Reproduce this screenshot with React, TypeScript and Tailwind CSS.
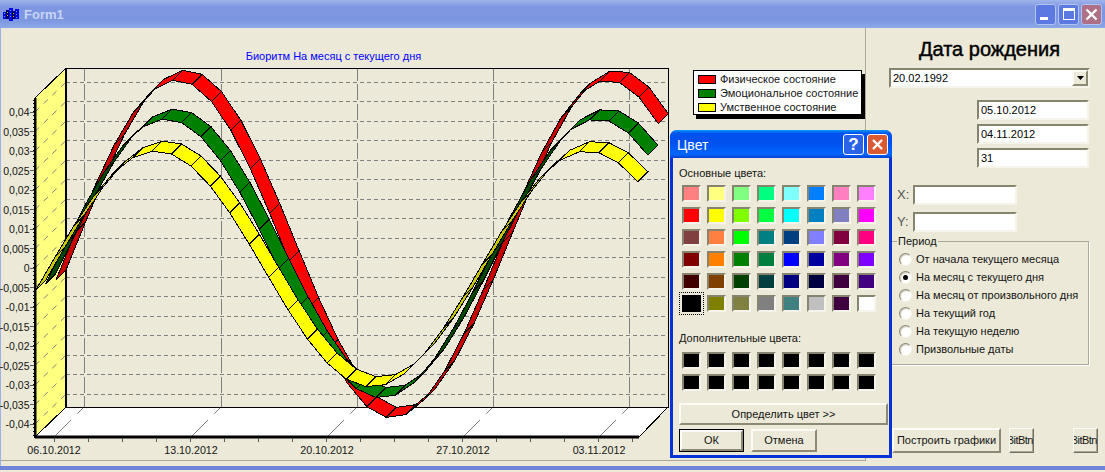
import React from "react";

const FONT = "font-['Liberation_Sans',Arial,sans-serif]";
const SUNKEN = "border-2 border-t-[#86836F] border-l-[#86836F] border-r-[#F6F4EA] border-b-[#F6F4EA]";
const RAISED = "border-2 border-t-[#FBFAF5] border-l-[#FBFAF5] border-r-[#8C8974] border-b-[#8C8974]";
const THIN_RAISED = "border border-t-[#FBFAF5] border-l-[#FBFAF5] border-r-[#716F64] border-b-[#716F64] shadow-[inset_-1px_-1px_0_#ACA899]";

const BASIC = [
  ["#FF8080","#FFFF80","#80FF80","#00FF80","#80FFFF","#0080FF","#FF80C0","#FF80FF"],
  ["#FF0000","#FFFF00","#80FF00","#00FF40","#00FFFF","#0080C0","#8080C0","#FF00FF"],
  ["#804040","#FF8040","#00FF00","#008080","#004080","#8080FF","#800040","#FF0080"],
  ["#800000","#FF8000","#008000","#008040","#0000FF","#0000A0","#800080","#8000FF"],
  ["#400000","#804000","#004000","#004040","#000080","#000040","#400040","#400080"],
  ["#000000","#808000","#808040","#808080","#408080","#C0C0C0","#400040","#FFFFFF"],
];

const SERIES = [
  { x0: 56, c: 249, a: 169, fill: "#FF0000", dark: "#C80000" },
  { x0: 45.5, c: 258.5, a: 139.5, fill: "#008000", dark: "#004800" },
  { x0: 35.5, c: 269, a: 118, fill: "#FFFF00", dark: "#C8C800" },
];
const DX = 19.43;

function Ribbon({ s }: { s: (typeof SERIES)[number] }) {
  const pts = Array.from({ length: 32 }, (_, i) => ({
    x: s.x0 + DX * i,
    y: s.c - s.a * Math.cos((2 * Math.PI * (i - 6.2)) / 22.2),
  }));
  return (
    <g stroke="#000" strokeWidth={1} shapeRendering="crispEdges">
      {pts.slice(0, -1).map((p, i) => {
        const n = pts[i + 1];
        const dy = n.y - p.y;
        return (
          <polygon
            key={i}
            fill={dy < -DX ? s.dark : s.fill}
            points={`${p.x},${p.y} ${n.x},${n.y} ${n.x + 10},${n.y - 10} ${p.x + 10},${p.y - 10}`}
          />
        );
      })}
    </g>
  );
}

const Y_LABELS = ["0,04","0,035","0,03","0,025","0,02","0,015","0,01","0,005","0","-0,005","-0,01","-0,015","-0,02","-0,025","-0,03","-0,035","-0,04"];
const MAJORS = [54, 191, 327, 463, 599];
const DATES = ["06.10.2012","13.10.2012","20.10.2012","27.10.2012","03.11.2012"];

function Chart() {
  const ys = Y_LABELS.map((_, i) => 112 + 19.5 * i);
  return (
    <svg className="block w-[865px] h-[398px] -ml-px" viewBox="0 62 865 398">
      <polygon points="35,98 66,68 66,407 35,437" fill="#FFFF80" />
      <polygon points="35,437 639,437 668,407 66,407" fill="#FFFFFF" />
      <g stroke="#808080" strokeWidth={1} shapeRendering="crispEdges">
        {ys.map((y) => (
          <line key={y} x1={66} x2={668} y1={y - 29.7} y2={y - 29.7} strokeDasharray="4 3" />
        ))}
        {MAJORS.map((x) => (
          <line key={x} x1={x + 30.7} x2={x + 30.7} y1={68} y2={407} strokeDasharray="16 3.5" strokeDashoffset={3.5} />
        ))}
      </g>
      <g stroke="#808080" strokeWidth={1}>
        {ys.map((y) => (
          <line key={y} x1={35} x2={66} y1={y} y2={y - 30} strokeDasharray="6 6" />
        ))}
        {MAJORS.map((x) => (
          <line key={x} x1={x} x2={x + 30} y1={437} y2={407} strokeDasharray="24 9 9 100" />
        ))}
      </g>
      <g stroke="#000" strokeWidth={1} fill="none" shapeRendering="crispEdges">
        <polyline points="66,407 66,68 668,68 668,407 66,407" />
        <line x1={35} y1={98} x2={66} y2={68} />
        <line x1={35} y1={437} x2={66} y2={407} />
        <line x1={639} y1={437} x2={668} y2={407} />
      </g>
      <line x1={66} y1={68} x2={66} y2={407} stroke="#000" strokeWidth={2} />
      <g>
        {SERIES.map((s) => (
          <Ribbon key={s.fill} s={s} />
        ))}
      </g>
      <rect x={34} y={98} width={2.5} height={340} fill="#000" />
      <rect x={35} y={435.5} width={604} height={3} fill="#000" />
      <g stroke="#000" strokeWidth={1} shapeRendering="crispEdges">
        {Array.from({ length: 87 }, (_, i) => (
          <line key={i} x1={33} x2={35} y1={100 + i * 3.9} y2={100 + i * 3.9} />
        ))}
      </g>
      <g stroke="#5A5A5A" strokeWidth={1} shapeRendering="crispEdges">
        {ys.map((y) => (
          <line key={y} x1={30} x2={34} y1={y} y2={y} />
        ))}
        {Array.from({ length: 18 }, (_, i) => (
          <line key={i} x1={54 + 34 * i} x2={54 + 34 * i} y1={438} y2={442} />
        ))}
      </g>
      <g fontFamily="'Liberation Sans',Arial,sans-serif" fontSize={10.5} fill="#141414">
        {Y_LABELS.map((t, i) => (
          <text key={t} x={29.5} y={ys[i] + 4} textAnchor="end">{t}</text>
        ))}
        {DATES.map((t, i) => (
          <text key={t} x={MAJORS[i]} y={454} textAnchor="middle" fontSize={10.7}>{t}</text>
        ))}
      </g>
    </svg>
  );
}

function Legend() {
  const rows = [
    ["#FF0000", "Физическое состояние"],
    ["#008000", "Эмоциональное состояние"],
    ["#FFFF00", "Умственное состояние"],
  ];
  return (
    <div className="absolute left-[692px] top-[42px] w-[169px] h-[45px] bg-white border border-black shadow-[3px_4px_0_#000] pl-[4px] pt-[4px] flex flex-col gap-[5px] text-[11px] leading-[9px] text-[#141414]">
      {rows.map(([c, t]) => (
        <div key={t} className="flex items-center h-[9px] gap-[4px] whitespace-nowrap">
          <span className="w-[18px] h-[9px] border border-black shrink-0" style={{ background: c }} />
          <span>{t}</span>
        </div>
      ))}
    </div>
  );
}

function Edit({ value, w }: { value?: string; w: string }) {
  return (
    <div className={`${SUNKEN} ${w} h-[20px] bg-white text-[11px] leading-[16px] pl-[2px] text-black`}>{value}</div>
  );
}

function Radio({ label, checked }: { label: string; checked?: boolean }) {
  return (
    <div className="flex items-center h-[18px] gap-[4px] whitespace-nowrap">
      <span className="w-[13px] h-[13px] rounded-full bg-white border border-t-[#8C8974] border-l-[#8C8974] border-r-[#F6F4EA] border-b-[#F6F4EA] flex items-center justify-center shrink-0 shadow-[inset_1px_1px_1px_#c8c6b8]">
        {checked && <span className="w-[5px] h-[5px] rounded-full bg-black" />}
      </span>
      <span>{label}</span>
    </div>
  );
}

function Swatch({ c, selected }: { c: string; selected?: boolean }) {
  return (
    <div className="relative w-[19px] h-[17px]">
      {selected && <span className="absolute -inset-[3px] border border-dotted border-black" />}
      <div
        className={selected ? "w-full h-full border-2 border-black" : `w-full h-full ${SUNKEN}`}
        style={{ background: c }}
      />
    </div>
  );
}

function ColorDialog() {
  return (
    <div className={`absolute left-[670px] top-[130px] w-[222px] h-[328px] flex flex-col border-[3px] border-t-0 border-[#0831D9] rounded-t-[7px] bg-[#ECE9D8] ${FONT}`}>
      <div className="h-[28px] -mx-[3px] shrink-0 rounded-t-[7px] flex items-center pl-[7px] pr-[4px] bg-[linear-gradient(180deg,#0997FF_0%,#0053EE_12%,#0050EE_45%,#0066FF_85%,#0058E8_93%,#003DD7_100%)]">
        <span className="text-white text-[14px] mt-[2px] flex-1">Цвет</span>
        <span className="w-[21px] h-[21px] mr-[3px] rounded-[3px] border border-white bg-[#2A62E8] text-white text-[17px] font-bold leading-[19px] text-center">?</span>
        <span className="w-[21px] h-[21px] rounded-[3px] border border-white bg-[#DB5A33] flex items-center justify-center">
          <svg width="13" height="13" viewBox="0 0 13 13"><path d="M2 2l9 9M11 2l-9 9" stroke="#fff" strokeWidth="2.4" /></svg>
        </span>
      </div>
      <div className="pl-[6px] pt-[9px] text-[11px] text-[#141414] flex flex-col">
        <div className="h-[13px] leading-[13px]">Основные цвета:</div>
        <div className="grid grid-cols-[repeat(8,19px)] gap-x-[6px] gap-y-[5px] mt-[5px] ml-[3px]">
          {BASIC.flat().map((c, i) => (
            <Swatch key={i} c={c} selected={i === 40} />
          ))}
        </div>
        <div className="h-[13px] leading-[13px] mt-[20px]">Дополнительные цвета:</div>
        <div className="grid grid-cols-[repeat(8,19px)] gap-x-[6px] gap-y-[5px] mt-[7px] ml-[3px]">
          {Array.from({ length: 16 }, (_, i) => (
            <Swatch key={i} c="#000000" />
          ))}
        </div>
        <div className={`${RAISED} w-[209px] h-[22px] mt-[12px] text-center leading-[18px] whitespace-nowrap`}>Определить цвет &gt;&gt;</div>
        <div className="flex gap-[7px] mt-[4px]">
          <div className="w-[65px] h-[23px] border border-black"><div className={`${RAISED} h-full text-center leading-[17px]`}>ОК</div></div>
          <div className={`${RAISED} w-[66px] h-[23px] text-center leading-[19px]`}>Отмена</div>
        </div>
      </div>
    </div>
  );
}

function WinBtn({ bg, children }: { bg: string; children: React.ReactNode }) {
  return (
    <div className={`w-[21px] h-[21px] rounded-[3px] border border-[#B4C4F2] flex items-center justify-center ${bg}`}>{children}</div>
  );
}

function FormIcon() {
  const cols = [
    { x: 0, top: 4, c: "#0000E0" },
    { x: 3, top: 2, c: "#000060" },
    { x: 6, top: 0, c: "#0000FF" },
    { x: 9, top: 3, c: "#000060" },
    { x: 12, top: 1, c: "#0000E0" },
  ];
  return (
    <svg width="16" height="13" viewBox="0 0 16 13" className="mr-[5px] mt-[1px]" shapeRendering="crispEdges">
      {cols.map((k) => (
        <rect key={k.x} x={k.x} y={k.top} width={4} height={11 - k.top + (k.x === 6 ? 2 : 0)} fill={k.c} />
      ))}
      <path d="M1 5h1v1H1zM1 8h1v1H1zM7 2h1v1H7zM7 5h1v1H7zM7 8h1v1H7zM13 3h1v1h-1zM13 6h1v1h-1zM13 9h1v1h-1z" fill="#30B0FF" />
      <path d="M4 4h1v1H4zM4 7h1v1H4zM10 5h1v1h-1zM10 8h1v1h-1z" fill="#D8C000" />
    </svg>
  );
}

export default function App() {
  return (
    <div className={`relative w-[1105px] h-[472px] flex flex-col overflow-hidden bg-[#ECE9D8] ${FONT}`}>
      <div className="h-[28px] shrink-0 flex items-center pl-[3px] pr-[3px] bg-[linear-gradient(180deg,#9FB4EC_0%,#7E97E0_25%,#7C96DF_70%,#8CA9EA_100%)]">
        <FormIcon />
        <span className="text-[13px] font-bold text-[#C8D4F5] flex-1 mt-[1px]">Form1</span>
        <div className="flex gap-[2px]">
          <WinBtn bg="bg-[#5B79E0]"><span className="w-[8px] h-[3px] bg-white mt-[9px] -ml-[4px]" /></WinBtn>
          <WinBtn bg="bg-[#5B79E0]"><span className="w-[12px] h-[12px] border border-t-[3px] border-white" /></WinBtn>
          <WinBtn bg="bg-[#AE7086]">
            <svg width="13" height="13" viewBox="0 0 13 13"><path d="M1.5 1.5l10 10M11.5 1.5l-10 10" stroke="#fff" strokeWidth="2.4" /></svg>
          </WinBtn>
        </div>
      </div>

      <div className="flex flex-1 min-h-0 border-l border-[#9FB2E8]">
        <div className="relative w-[865px] h-[433px] border-r border-b border-[#ACA899] shrink-0">
          <div className="h-[34px] pt-[22px] text-[11px] leading-[13px] text-[#0000FF] text-center pr-[199px]">Биоритм На месяц с текущего дня</div>
          <Chart />
          <Legend />
        </div>

        <div className="flex-1 flex flex-col pl-[23px] text-[11px] text-[#141414]">
          <div className="h-[40px] w-[201px] text-center text-[20px] leading-[43px] text-black whitespace-nowrap [-webkit-text-stroke:0.45px_black]">Дата рождения</div>
          <div className={`${SUNKEN} relative w-[201px] h-[20px] bg-white leading-[16px] pl-[2px] text-black`}>
            20.02.1992
            <span className={`${RAISED} absolute right-0 top-0 w-[16px] h-[16px] bg-[#ECE9D8] flex items-center justify-center`}>
              <svg width="7" height="4" viewBox="0 0 7 4"><path d="M0 0h7L3.5 4z" fill="#000" /></svg>
            </span>
          </div>
          <div className="flex flex-col gap-[4px] mt-[12px] ml-[88px]">
            <Edit w="w-[112px]" value="05.10.2012" />
            <Edit w="w-[112px]" value="04.11.2012" />
            <Edit w="w-[112px]" value="31" />
          </div>
          <div className="flex items-center mt-[17px] ml-[8px] h-[20px]">
            <span className="w-[16px] text-[13px] text-[#555]">X:</span>
            <Edit w="w-[104px]" />
          </div>
          <div className="flex items-center mt-[7px] ml-[8px] h-[20px]">
            <span className="w-[16px] text-[13px] text-[#555]">Y:</span>
            <Edit w="w-[104px]" />
          </div>
          <div className="relative mt-[9px] w-[200px] h-[124px] border border-[#ACA899] shadow-[1px_1px_0_#fff] pt-[8px] pl-[9px]">
            <span className="absolute left-[7px] -top-[7px] px-[1px] bg-[#ECE9D8] leading-[13px]">Период</span>
            <Radio label="От начала текущего месяца" />
            <Radio label="На месяц с текущего дня" checked />
            <Radio label="На месяц от произвольного дня" />
            <Radio label="На текущий год" />
            <Radio label="На текущую неделю" />
            <Radio label="Призвольные даты" />
          </div>
          <div className="flex mt-[63px] ml-[3px] h-[25px]">
            <div className={`${RAISED} w-[109px] text-center leading-[21px] whitespace-nowrap`}>Построить графики</div>
            <div className={`${THIN_RAISED} w-[25px] ml-[8px] flex justify-end overflow-hidden leading-[22px] whitespace-nowrap`}><span className="shrink-0 tracking-[-0.5px]">BitBtn</span></div>
            <div className={`${THIN_RAISED} w-[25px] ml-[39px] flex justify-end overflow-hidden leading-[22px] whitespace-nowrap`}><span className="shrink-0 tracking-[-0.5px]">BitBtn</span></div>
          </div>
        </div>
      </div>
      <div className="h-[4px] shrink-0 bg-[#7083D8]" />
      <div className="h-[2px] shrink-0 bg-[#ECE9D8]" />

      <ColorDialog />
    </div>
  );
}
